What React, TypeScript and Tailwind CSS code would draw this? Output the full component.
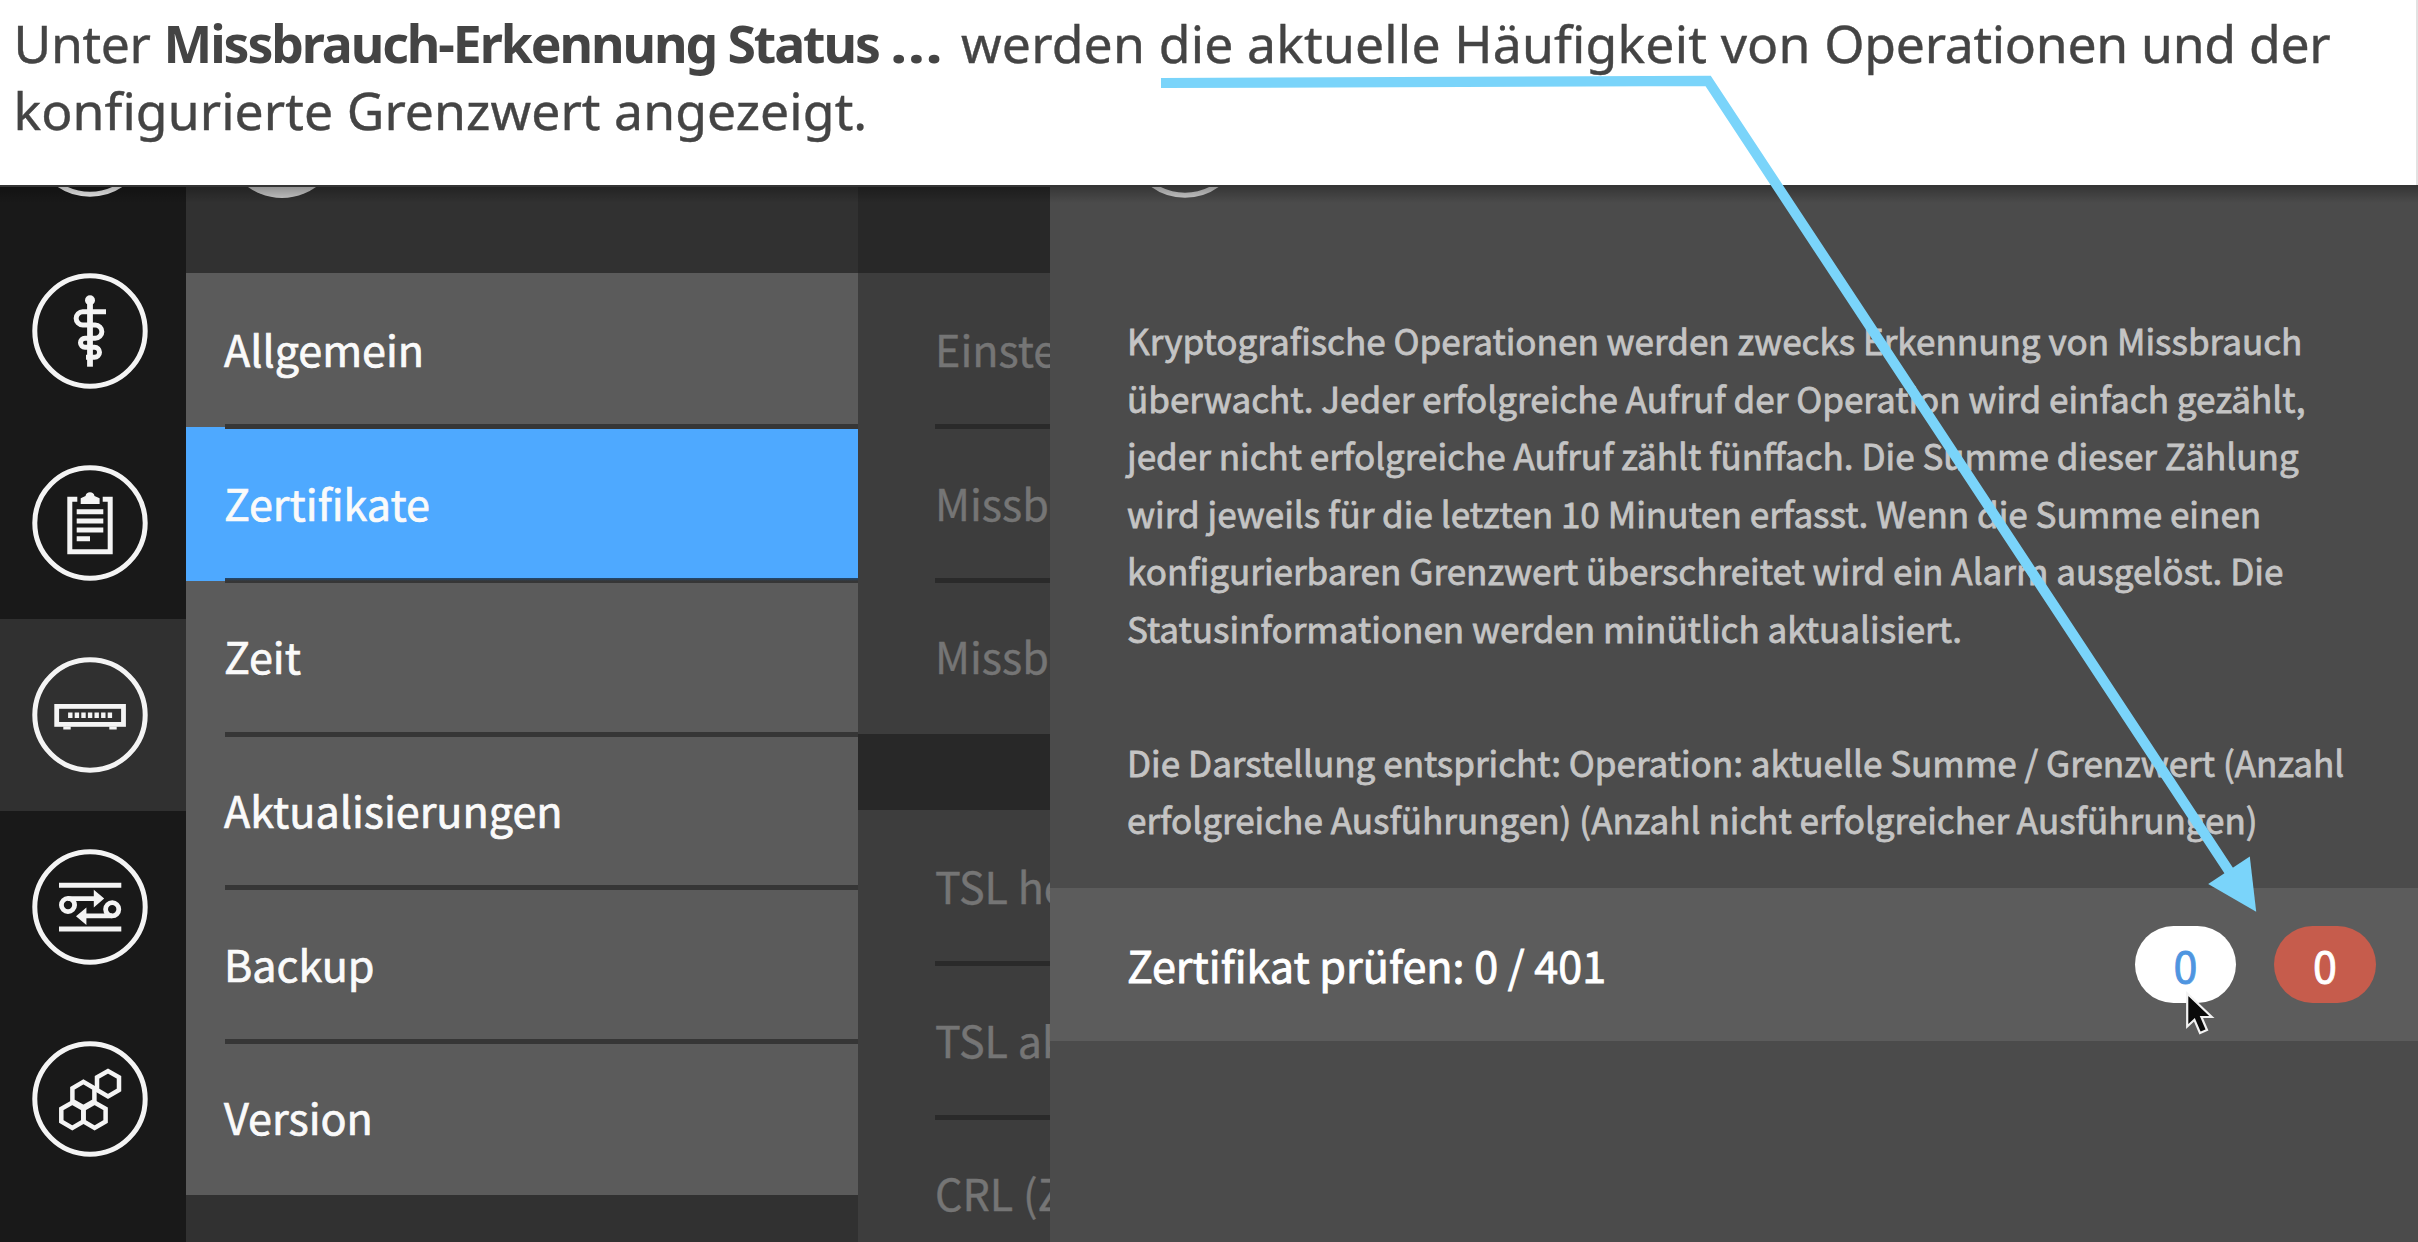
import React from "react";

const hexPoints = (cx: number, cy: number, r: number) =>
  [0, 1, 2, 3, 4, 5]
    .map((i) => {
      const a = (Math.PI / 3) * i + Math.PI / 6;
      return `${(cx + r * Math.cos(a)).toFixed(2)},${(cy + r * Math.sin(a)).toFixed(2)}`;
    })
    .join(" ");

function Ring({ children, className = "text-[#f4f4f4]" }: { children?: React.ReactNode; className?: string }) {
  return (
    <svg viewBox="0 0 116 116" className={`size-[116px] shrink-0 ${className}`} fill="none" stroke="currentColor">
      <circle cx="58" cy="58" r="55.2" strokeWidth="5" />
      {children}
    </svg>
  );
}

const StaffIcon = () => (
  <Ring>
    <circle cx="58" cy="27.3" r="5" fill="currentColor" stroke="none" />
    <path d="M58 27V93.7" strokeWidth="5.8" />
    <path
      d="M74 38.7H50.8a6.65 6.65 0 0 0 0 13.3H63.2a6.65 6.65 0 0 1 0 13.3H53a4.5 4.5 0 0 0 0 9H62.5a5 5 0 0 1 0 10H54"
      strokeWidth="5"
    />
  </Ring>
);

const ClipboardIcon = () => (
  <Ring>
    <path d="M45.3 34.2H37.8V86.8H78.2V34.2H70.7" strokeWidth="5" />
    <path d="M48.7 39V33.2L53.5 31a4.6 4.6 0 0 1 9 0L67.6 33.2V39Z" fill="currentColor" stroke="none" />
    <path d="M44.7 46.7H71.3M44.7 56H71.3M44.7 65H71.3M44.7 73.7H58" strokeWidth="5" />
  </Ring>
);

const DeviceIcon = () => (
  <Ring>
    <rect x="24.7" y="49.4" width="66.8" height="18" strokeWidth="4.8" />
    <path d="M31.3 71H38.7M77.3 71H84.7" strokeWidth="3" />
    <path d="M36.1 58.2H81" strokeWidth="5.4" strokeDasharray="4.4 2.2" />
  </Ring>
);

const TransferIcon = () => (
  <Ring>
    <path d="M27 36.3H89.3M27 80H89.3" strokeWidth="5" />
    <circle cx="36" cy="56" r="6.6" strokeWidth="4.8" />
    <circle cx="80.2" cy="60.3" r="6.6" strokeWidth="4.8" />
    <path d="M36 49.6H64M80 66.9H52" strokeWidth="4.8" />
    <path d="M61.8 40.8L72.2 49.6L61.8 58.4ZM54.4 58.4L44 67.2L54.4 76Z" fill="currentColor" stroke="none" />
  </Ring>
);

const HexIcon = () => (
  <Ring>
    {[
      [76, 42.7],
      [51.4, 53.6],
      [40.3, 74.2],
      [62.6, 74.2],
    ].map(([x, y]) => (
      <polygon key={`${x}-${y}`} points={hexPoints(x, y, 12.7)} strokeWidth="4.5" />
    ))}
  </Ring>
);

const nav = [
  { id: "home", icon: <Ring />, active: false },
  { id: "medical", icon: <StaffIcon />, active: false },
  { id: "log", icon: <ClipboardIcon />, active: false },
  { id: "device", icon: <DeviceIcon />, active: true },
  { id: "transfer", icon: <TransferIcon />, active: false },
  { id: "network", icon: <HexIcon />, active: false },
];

const menu = ["Allgemein", "Zertifikate", "Zeit", "Aktualisierungen", "Backup", "Version"];

function MenuRow({ label, selected, last }: { label: string; selected: boolean; last: boolean }) {
  return (
    <>
      <div
        className={`flex h-[153.6px] shrink-0 items-center pb-[3px] pl-[38px] text-[43.1px] leading-none text-[#fafafa] [-webkit-text-stroke:0.7px_#fafafa] ${
          selected ? "bg-[#4ea9ff]" : "bg-[#5b5b5b]"
        }`}
      >
        {label}
      </div>
      {!last && (
        <div
          className={`relative -my-[2.5px] ml-[39px] h-[5px] shrink-0 ${
            selected ? "bg-linear-to-b from-[#1d4870] to-[#363636] to-60%" : "bg-[#363636]"
          }`}
        />
      )}
    </>
  );
}

function DimGroup({ items }: { items: string[] }) {
  return (
    <div className="flex shrink-0 flex-col bg-[#3d3d3d]">
      {items.map((t, i) => (
        <React.Fragment key={i}>
          <div className="flex h-[153.6px] shrink-0 items-center overflow-hidden pb-[3px] pl-[77px] text-[43.1px] leading-none whitespace-nowrap text-[#757575] [-webkit-text-stroke:0.4px_#757575]">
            {t}
          </div>
          {i < items.length - 1 && <div className="relative -my-[2.5px] ml-[77px] h-[5px] shrink-0 bg-[#2a2a2a]" />}
        </React.Fragment>
      ))}
    </div>
  );
}

const info = [
  "Kryptografische Operationen werden zwecks Erkennung von Missbrauch",
  "überwacht. Jeder erfolgreiche Aufruf der Operation wird einfach gezählt,",
  "jeder nicht erfolgreiche Aufruf zählt fünffach. Die Summe dieser Zählung",
  "wird jeweils für die letzten 10 Minuten erfasst. Wenn die Summe einen",
  "konfigurierbaren Grenzwert überschreitet wird ein Alarm ausgelöst. Die",
  "Statusinformationen werden minütlich aktualisiert.",
];
const legend = [
  "Die Darstellung entspricht: Operation: aktuelle Summe / Grenzwert (Anzahl",
  "erfolgreiche Ausführungen) (Anzahl nicht erfolgreicher Ausführungen)",
];

export default function App() {
  return (
    <div className="relative flex h-[1242px] w-[2418px] flex-col overflow-hidden bg-white">
      <header className="h-[185px] shrink-0 border-r-2 border-[#e2e2e2] pt-[10.4px] pl-[13.5px] font-['Noto_Sans',sans-serif] text-[51.7px] leading-[67px] whitespace-pre text-[#444444]">
        <p className="flex [-webkit-text-stroke:0.4px_#444444]">
          <span className="w-[150px] tracking-[-0.4px]">Unter </span>
          <b className="flex w-[797.5px] font-bold [-webkit-text-stroke:0px]">
            <span className="tracking-[-2.08px]">Missbrauch-Erkennung Status </span>
            <span className="origin-left scale-x-120">…</span>
          </b>
          <span className="tracking-[0.18px]">werden die aktuelle Häufigkeit von </span>
          <span className="tracking-[-0.3px]">Operationen und der</span>
        </p>
        <p className="tracking-[0.08px] [-webkit-text-stroke:0.4px_#444444]">konfigurierte Grenzwert angezeigt.</p>
      </header>

      <div className="relative flex h-[1057px] shrink-0 overflow-hidden border-t-2 border-[#353535] font-['Noto_Sans_CJK_SC',sans-serif]">
        <nav className="flex w-[186px] shrink-0 flex-col overflow-hidden bg-[#191919]">
          <div className="-mt-[144px] flex flex-col">
            {nav.map((n) => (
              <div
                key={n.id}
                className={`flex h-[192px] shrink-0 items-center pl-[32px] ${n.active ? "bg-[#303030]" : ""}`}
              >
                {n.icon}
              </div>
            ))}
          </div>
        </nav>

        <section className="flex w-[672px] shrink-0 flex-col bg-[#313131]">
          <div className="h-[86.4px] shrink-0 overflow-hidden pl-[38px]">
            <div className="-mt-[105.5px] size-[116px] rounded-full bg-[#cbcbcb]" />
          </div>
          {menu.map((m, i) => (
            <MenuRow key={m} label={m} selected={i === 1} last={i === menu.length - 1} />
          ))}
        </section>

        <section className="flex w-[192px] shrink-0 flex-col gap-[76px] overflow-hidden bg-[#282828] pt-[86.4px]">
          <DimGroup items={["Einstellungen", "Missbrauch", "Missbrauch"]} />
          <DimGroup items={["TSL herunterladen", "TSL aktualisieren", "CRL (Zertifikate)"]} />
        </section>

        <main className="flex flex-1 flex-col bg-[#4b4b4b]">
          <div className="h-[124px] shrink-0 overflow-hidden pl-[77px]">
            <div className="-mt-[105.5px]">
              <Ring className="text-[#cfcfcf]" />
            </div>
          </div>
          <div className="flex h-[577px] shrink-0 flex-col gap-[76px] pl-[77px] text-[35.05px] leading-[57.6px] whitespace-nowrap text-[#c4c4c4] [-webkit-text-stroke:0.8px_#c4c4c4]">
            <div>
              {info.map((l) => (
                <p key={l}>{l}</p>
              ))}
            </div>
            <div>
              {legend.map((l) => (
                <p key={l}>{l}</p>
              ))}
            </div>
          </div>
          <div className="flex h-[153px] shrink-0 items-center bg-[#5c5c5c] pr-[42px] pl-[77px] text-[43.1px] leading-none text-white">
            <span className="flex-1 [-webkit-text-stroke:0.9px_white]">Zertifikat prüfen: 0 / 401</span>
            <span className="mr-[38px] flex h-[77px] w-[101px] items-center justify-center rounded-[38.5px] bg-white text-[#4f95e0] [-webkit-text-stroke:0.8px_#4f95e0]">
              0
            </span>
            <span className="flex h-[77px] w-[102px] items-center justify-center rounded-[38.5px] bg-[#c65c4c] [-webkit-text-stroke:0.8px_white]">
              0
            </span>
          </div>
        </main>

        <div className="absolute inset-x-0 top-0 h-[16px] bg-linear-to-b from-black/28 to-transparent" />
      </div>

      <svg viewBox="0 0 2418 1242" className="pointer-events-none absolute inset-0 h-full w-full">
        <path
          d="M2187.2 993.5V1026.5L2194.4 1019.8L2200 1033L2207 1030L2201.4 1017H2211.8Z"
          fill="#0a0a0a"
          stroke="#f2f2f2"
          strokeWidth="2.2"
        />
        <path d="M1161 83L1708 80.8L2229 871" fill="none" stroke="#7ad4fa" strokeWidth="10.2" />
        <path d="M2256.2 911.7L2208.2 884L2249.8 856.6Z" fill="#7ad4fa" />
      </svg>
    </div>
  );
}
